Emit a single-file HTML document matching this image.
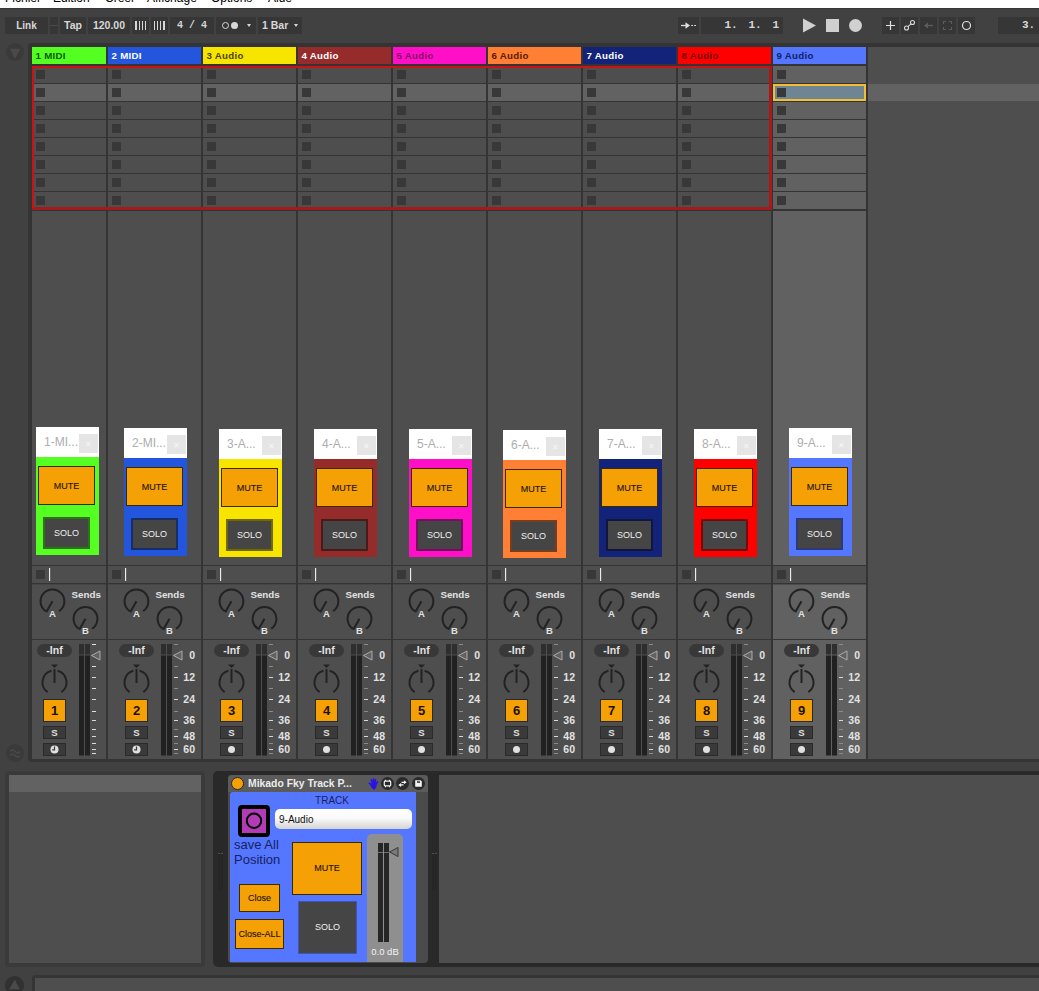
<!DOCTYPE html>
<html lang="fr"><head><meta charset="utf-8"><title>Live</title>
<style>
html,body{margin:0;padding:0;}
body{width:1039px;height:991px;overflow:hidden;background:#414141;position:relative;font-family:"Liberation Sans",sans-serif;}
div,svg,span{position:absolute;box-sizing:border-box;}
.t{white-space:nowrap;line-height:1;}
.b{font-weight:bold;}
.tb{background:#363636;top:17px;height:17px;}
.tbt{color:#d8d8d8;font-weight:bold;font-size:10.5px;top:3px;white-space:nowrap;line-height:11px;}
.hd{font-weight:bold;font-size:9.700px;letter-spacing:0.300px;line-height:18px;padding-left:3.500px;white-space:nowrap;overflow:hidden;}
.st{width:9px;height:9px;background:#383838;}
.lbl{color:#e2e2e2;font-weight:bold;white-space:nowrap;line-height:1;}
.mute{white-space:nowrap;background:#f5a105;border:1px solid #3a2a00;color:#1e1200;font-size:9px;-webkit-text-stroke:0.120px #1e1200;text-align:center;}
.solo{background:#454545;color:#f0f0f0;font-size:9px;text-align:center;}
.wt{color:#adadad;font-size:12px;white-space:nowrap;line-height:1;}
</style></head><body>

<div style="left:0;top:0;width:1039px;height:8px;background:#ffffff;overflow:hidden;">
<span class="t" style="left:5px;top:-8px;font-size:12px;color:#000;">Fichier</span>
<span class="t" style="left:53px;top:-8px;font-size:12px;color:#000;">Edition</span>
<span class="t" style="left:105px;top:-8px;font-size:12px;color:#000;">Créer</span>
<span class="t" style="left:147px;top:-8px;font-size:12px;color:#000;">Affichage</span>
<span class="t" style="left:211px;top:-8px;font-size:12px;color:#000;">Options</span>
<span class="t" style="left:268px;top:-8px;font-size:12px;color:#000;">Aide</span>
</div>
<div style="left:0;top:8px;width:1039px;height:1px;background:#363636;"></div>
<div class="tb" style="left:5px;width:43px;"><span class="tbt" style="left:0;width:43px;text-align:center;font-size:10px;">Link</span></div>
<div class="tb" style="left:50px;width:8px;"><div style="left:0;top:8px;width:8px;height:1px;background:#4a4a4a;"></div></div>
<div class="tb" style="left:60px;width:26px;"><span class="tbt" style="left:0;width:26px;text-align:center;">Tap</span></div>
<div class="tb" style="left:88px;width:42px;"><span class="tbt" style="left:0;width:42px;text-align:center;">120.00</span></div>
<div class="tb" style="left:132px;width:17px;"><div style="left:3px;top:4px;width:2px;height:9px;background:#d8d8d8;"></div><div style="left:7px;top:4px;width:1px;height:9px;background:#d8d8d8;"></div><div style="left:10px;top:4px;width:1px;height:9px;background:#d8d8d8;"></div><div style="left:13px;top:4px;width:1px;height:9px;background:#d8d8d8;"></div></div>
<div class="tb" style="left:151px;width:17px;"><div style="left:3px;top:4px;width:1px;height:9px;background:#d8d8d8;"></div><div style="left:6px;top:4px;width:1px;height:9px;background:#d8d8d8;"></div><div style="left:9px;top:4px;width:1px;height:9px;background:#d8d8d8;"></div><div style="left:12px;top:4px;width:2px;height:9px;background:#d8d8d8;"></div></div>
<div class="tb" style="left:170px;width:44px;"><span class="tbt" style="left:0;width:44px;text-align:center;font-family:'Liberation Mono',monospace;font-size:10px;">4 / 4</span></div>
<div class="tb" style="left:216px;width:40px;"><div style="left:6px;top:5px;width:7px;height:7px;border-radius:50%;border:1px solid #d8d8d8;"></div><div style="left:15px;top:5px;width:7px;height:7px;border-radius:50%;background:#d8d8d8;"></div><div style="left:31px;top:7px;width:0;height:0;border-left:2.5px solid transparent;border-right:2.5px solid transparent;border-top:3px solid #d8d8d8;"></div></div>
<div class="tb" style="left:258px;width:44px;"><span class="tbt" style="left:4px;">1 Bar</span><div style="left:36px;top:7px;width:0;height:0;border-left:2.5px solid transparent;border-right:2.5px solid transparent;border-top:3px solid #d8d8d8;"></div></div>
<div class="tb" style="left:678px;width:21px;"><svg style="left:0;top:0;" width="21" height="17" viewBox="0 0 21 17"><path d="M3 8.500H9" fill="none" stroke="#e0e0e0" stroke-width="1.300"/><path d="M7.500 5.200L12 8.500L7.500 11.800Z" fill="#e0e0e0"/><path d="M13.300 8.500H15M16.200 8.500H18" stroke="#e0e0e0" stroke-width="1.200"/></svg></div>
<div class="tb" style="left:701px;width:82px;"><span class="tbt" style="right:4px;font-family:'Liberation Mono',monospace;font-size:11px;word-spacing:4.2px;">1. 1. 1</span></div>
<svg style="left:802px;top:18px;" width="16" height="16" viewBox="0 0 16 16"><path d="M1 0.5L14 7.5L1 14.5Z" fill="#d0d0d0"/></svg>
<div style="left:826px;top:19px;width:13px;height:13px;background:#d0d0d0;"></div>
<div style="left:849px;top:19px;width:13px;height:13px;border-radius:50%;background:#d0d0d0;"></div>
<div class="tb" style="left:882px;width:17px;"><svg style="left:0;top:0;" width="17" height="17" viewBox="0 0 17 17"><path d="M8.5 4V13M4 8.5H13" stroke="#e0e0e0" stroke-width="1.2"/></svg></div>
<div class="tb" style="left:901px;width:17px;"><svg style="left:0;top:0;" width="17" height="17" viewBox="0 0 17 17"><circle cx="5.5" cy="11" r="2" fill="none" stroke="#d8d8d8" stroke-width="1.1"/><circle cx="11.5" cy="5.5" r="2" fill="none" stroke="#d8d8d8" stroke-width="1.1"/><path d="M7 9.6L10 6.9" stroke="#d8d8d8" stroke-width="1.1"/></svg></div>
<div class="tb" style="left:920px;width:17px;"><svg style="left:0;top:0;" width="17" height="17" viewBox="0 0 17 17"><path d="M4 8.5L8 5.5V11.5Z" fill="#5c5c5c"/><path d="M7 8.5H13" stroke="#5c5c5c" stroke-width="1.4"/></svg></div>
<div class="tb" style="left:939px;width:17px;"><svg style="left:0;top:0;" width="17" height="17" viewBox="0 0 17 17"><path d="M4.5 7V4.5H7M10 4.5H12.5V7M12.5 10V12.500H10M7 12.500H4.500V10" fill="none" stroke="#5c5c5c" stroke-width="1.1"/></svg></div>
<div class="tb" style="left:958px;width:17px;"><svg style="left:0;top:0;" width="17" height="17" viewBox="0 0 17 17"><circle cx="8.5" cy="8.500" r="4" fill="none" stroke="#e0e0e0" stroke-width="1.2"/></svg></div>
<div class="tb" style="left:998px;width:41px;"><span class="tbt" style="left:24px;font-family:'Liberation Mono',monospace;font-size:11px;">3.</span></div>
<div style="left:6px;top:43px;width:18px;height:18px;border-radius:50%;background:#3a3a3a;"></div>
<svg style="left:6px;top:43px;" width="18" height="18" viewBox="0 0 18 18"><path d="M3.700 5.700H14.300L9 15.700Z" fill="#4a4a4a"/></svg>
<div style="left:6px;top:744px;width:18px;height:18px;border-radius:50%;background:#3a3a3a;"></div>
<svg style="left:6px;top:744px;" width="18" height="18" viewBox="0 0 18 18"><path d="M4 7.5Q6.500 4.500 9 7.500T14 7.500M4 11.500Q6.500 8.500 9 11.500T14 11.500" fill="none" stroke="#4a4a4a" stroke-width="1.600"/></svg>
<div style="left:5px;top:976px;width:19px;height:19px;border-radius:50%;background:#313131;"></div>
<svg style="left:5px;top:976px;" width="19" height="19" viewBox="0 0 19 19"><path d="M4.200 13.300H14.800L9.700 3.600Z" fill="#4a4a4a"/></svg>
<div style="left:28px;top:43px;width:1015px;height:719px;background:#343434;border-radius:4px 0 0 4px;"></div>
<div style="left:868px;top:47px;width:171px;height:712px;background:#4e4e4e;"></div>
<div style="left:868px;top:84px;width:171px;height:17px;background:#626262;"></div>
<div class="hd" style="left:32px;top:47px;width:74px;height:17px;background:#55ff22;color:#0a5a00;">1 MIDI</div>
<div style="left:32px;top:66px;width:74px;height:17px;background:#4e4e4e;"></div>
<div class="st" style="left:36px;top:70px;"></div>
<div style="left:32px;top:84px;width:74px;height:17px;background:#626262;"></div>
<div class="st" style="left:36px;top:88px;"></div>
<div style="left:32px;top:102px;width:74px;height:17px;background:#4e4e4e;"></div>
<div class="st" style="left:36px;top:106px;"></div>
<div style="left:32px;top:120px;width:74px;height:17px;background:#4e4e4e;"></div>
<div class="st" style="left:36px;top:124px;"></div>
<div style="left:32px;top:138px;width:74px;height:17px;background:#4e4e4e;"></div>
<div class="st" style="left:36px;top:142px;"></div>
<div style="left:32px;top:156px;width:74px;height:17px;background:#4e4e4e;"></div>
<div class="st" style="left:36px;top:160px;"></div>
<div style="left:32px;top:174px;width:74px;height:17px;background:#4e4e4e;"></div>
<div class="st" style="left:36px;top:178px;"></div>
<div style="left:32px;top:192px;width:74px;height:17px;background:#4e4e4e;"></div>
<div class="st" style="left:36px;top:196px;"></div>
<div style="left:32px;top:211px;width:74px;height:354px;background:#4e4e4e;"></div>
<div style="left:32px;top:566px;width:74px;height:17px;background:#4e4e4e;"></div>
<div class="st" style="left:36px;top:570px;"></div>
<div style="left:49px;top:568px;width:1px;height:13px;background:#ececec;"></div>
<div style="left:50px;top:568px;width:1px;height:13px;background:rgba(255,255,255,0.130);"></div>
<div style="left:32px;top:584px;width:74px;height:55px;background:#4e4e4e;"></div>
<div style="left:32px;top:584px;width:74px;height:1px;background:#454545;"></div>
<div style="left:32px;top:640px;width:74px;height:119px;background:#4e4e4e;"></div>
<div class="hd" style="left:108px;top:47px;width:93px;height:17px;background:#2356dc;color:#ffffff;">2 MIDI</div>
<div style="left:108px;top:66px;width:93px;height:17px;background:#4e4e4e;"></div>
<div class="st" style="left:112px;top:70px;"></div>
<div style="left:108px;top:84px;width:93px;height:17px;background:#626262;"></div>
<div class="st" style="left:112px;top:88px;"></div>
<div style="left:108px;top:102px;width:93px;height:17px;background:#4e4e4e;"></div>
<div class="st" style="left:112px;top:106px;"></div>
<div style="left:108px;top:120px;width:93px;height:17px;background:#4e4e4e;"></div>
<div class="st" style="left:112px;top:124px;"></div>
<div style="left:108px;top:138px;width:93px;height:17px;background:#4e4e4e;"></div>
<div class="st" style="left:112px;top:142px;"></div>
<div style="left:108px;top:156px;width:93px;height:17px;background:#4e4e4e;"></div>
<div class="st" style="left:112px;top:160px;"></div>
<div style="left:108px;top:174px;width:93px;height:17px;background:#4e4e4e;"></div>
<div class="st" style="left:112px;top:178px;"></div>
<div style="left:108px;top:192px;width:93px;height:17px;background:#4e4e4e;"></div>
<div class="st" style="left:112px;top:196px;"></div>
<div style="left:108px;top:211px;width:93px;height:354px;background:#4e4e4e;"></div>
<div style="left:108px;top:566px;width:93px;height:17px;background:#4e4e4e;"></div>
<div class="st" style="left:112px;top:570px;"></div>
<div style="left:125px;top:568px;width:1px;height:13px;background:#ececec;"></div>
<div style="left:126px;top:568px;width:1px;height:13px;background:rgba(255,255,255,0.130);"></div>
<div style="left:108px;top:584px;width:93px;height:55px;background:#4e4e4e;"></div>
<div style="left:108px;top:584px;width:93px;height:1px;background:#454545;"></div>
<div style="left:108px;top:640px;width:93px;height:119px;background:#4e4e4e;"></div>
<div class="hd" style="left:203px;top:47px;width:93px;height:17px;background:#f7e500;color:#4a4400;">3 Audio</div>
<div style="left:203px;top:66px;width:93px;height:17px;background:#4e4e4e;"></div>
<div class="st" style="left:207px;top:70px;"></div>
<div style="left:203px;top:84px;width:93px;height:17px;background:#626262;"></div>
<div class="st" style="left:207px;top:88px;"></div>
<div style="left:203px;top:102px;width:93px;height:17px;background:#4e4e4e;"></div>
<div class="st" style="left:207px;top:106px;"></div>
<div style="left:203px;top:120px;width:93px;height:17px;background:#4e4e4e;"></div>
<div class="st" style="left:207px;top:124px;"></div>
<div style="left:203px;top:138px;width:93px;height:17px;background:#4e4e4e;"></div>
<div class="st" style="left:207px;top:142px;"></div>
<div style="left:203px;top:156px;width:93px;height:17px;background:#4e4e4e;"></div>
<div class="st" style="left:207px;top:160px;"></div>
<div style="left:203px;top:174px;width:93px;height:17px;background:#4e4e4e;"></div>
<div class="st" style="left:207px;top:178px;"></div>
<div style="left:203px;top:192px;width:93px;height:17px;background:#4e4e4e;"></div>
<div class="st" style="left:207px;top:196px;"></div>
<div style="left:203px;top:211px;width:93px;height:354px;background:#4e4e4e;"></div>
<div style="left:203px;top:566px;width:93px;height:17px;background:#4e4e4e;"></div>
<div class="st" style="left:207px;top:570px;"></div>
<div style="left:220px;top:568px;width:1px;height:13px;background:#ececec;"></div>
<div style="left:221px;top:568px;width:1px;height:13px;background:rgba(255,255,255,0.130);"></div>
<div style="left:203px;top:584px;width:93px;height:55px;background:#4e4e4e;"></div>
<div style="left:203px;top:584px;width:93px;height:1px;background:#454545;"></div>
<div style="left:203px;top:640px;width:93px;height:119px;background:#4e4e4e;"></div>
<div class="hd" style="left:298px;top:47px;width:93px;height:17px;background:#962b2b;color:#ffffff;">4 Audio</div>
<div style="left:298px;top:66px;width:93px;height:17px;background:#4e4e4e;"></div>
<div class="st" style="left:302px;top:70px;"></div>
<div style="left:298px;top:84px;width:93px;height:17px;background:#626262;"></div>
<div class="st" style="left:302px;top:88px;"></div>
<div style="left:298px;top:102px;width:93px;height:17px;background:#4e4e4e;"></div>
<div class="st" style="left:302px;top:106px;"></div>
<div style="left:298px;top:120px;width:93px;height:17px;background:#4e4e4e;"></div>
<div class="st" style="left:302px;top:124px;"></div>
<div style="left:298px;top:138px;width:93px;height:17px;background:#4e4e4e;"></div>
<div class="st" style="left:302px;top:142px;"></div>
<div style="left:298px;top:156px;width:93px;height:17px;background:#4e4e4e;"></div>
<div class="st" style="left:302px;top:160px;"></div>
<div style="left:298px;top:174px;width:93px;height:17px;background:#4e4e4e;"></div>
<div class="st" style="left:302px;top:178px;"></div>
<div style="left:298px;top:192px;width:93px;height:17px;background:#4e4e4e;"></div>
<div class="st" style="left:302px;top:196px;"></div>
<div style="left:298px;top:211px;width:93px;height:354px;background:#4e4e4e;"></div>
<div style="left:298px;top:566px;width:93px;height:17px;background:#4e4e4e;"></div>
<div class="st" style="left:302px;top:570px;"></div>
<div style="left:315px;top:568px;width:1px;height:13px;background:#ececec;"></div>
<div style="left:316px;top:568px;width:1px;height:13px;background:rgba(255,255,255,0.130);"></div>
<div style="left:298px;top:584px;width:93px;height:55px;background:#4e4e4e;"></div>
<div style="left:298px;top:584px;width:93px;height:1px;background:#454545;"></div>
<div style="left:298px;top:640px;width:93px;height:119px;background:#4e4e4e;"></div>
<div class="hd" style="left:393px;top:47px;width:93px;height:17px;background:#ff10c8;color:#8a0a6a;">5 Audio</div>
<div style="left:393px;top:66px;width:93px;height:17px;background:#4e4e4e;"></div>
<div class="st" style="left:397px;top:70px;"></div>
<div style="left:393px;top:84px;width:93px;height:17px;background:#626262;"></div>
<div class="st" style="left:397px;top:88px;"></div>
<div style="left:393px;top:102px;width:93px;height:17px;background:#4e4e4e;"></div>
<div class="st" style="left:397px;top:106px;"></div>
<div style="left:393px;top:120px;width:93px;height:17px;background:#4e4e4e;"></div>
<div class="st" style="left:397px;top:124px;"></div>
<div style="left:393px;top:138px;width:93px;height:17px;background:#4e4e4e;"></div>
<div class="st" style="left:397px;top:142px;"></div>
<div style="left:393px;top:156px;width:93px;height:17px;background:#4e4e4e;"></div>
<div class="st" style="left:397px;top:160px;"></div>
<div style="left:393px;top:174px;width:93px;height:17px;background:#4e4e4e;"></div>
<div class="st" style="left:397px;top:178px;"></div>
<div style="left:393px;top:192px;width:93px;height:17px;background:#4e4e4e;"></div>
<div class="st" style="left:397px;top:196px;"></div>
<div style="left:393px;top:211px;width:93px;height:354px;background:#4e4e4e;"></div>
<div style="left:393px;top:566px;width:93px;height:17px;background:#4e4e4e;"></div>
<div class="st" style="left:397px;top:570px;"></div>
<div style="left:410px;top:568px;width:1px;height:13px;background:#ececec;"></div>
<div style="left:411px;top:568px;width:1px;height:13px;background:rgba(255,255,255,0.130);"></div>
<div style="left:393px;top:584px;width:93px;height:55px;background:#4e4e4e;"></div>
<div style="left:393px;top:584px;width:93px;height:1px;background:#454545;"></div>
<div style="left:393px;top:640px;width:93px;height:119px;background:#4e4e4e;"></div>
<div class="hd" style="left:488px;top:47px;width:93px;height:17px;background:#ff7f35;color:#5a1a00;">6 Audio</div>
<div style="left:488px;top:66px;width:93px;height:17px;background:#4e4e4e;"></div>
<div class="st" style="left:492px;top:70px;"></div>
<div style="left:488px;top:84px;width:93px;height:17px;background:#626262;"></div>
<div class="st" style="left:492px;top:88px;"></div>
<div style="left:488px;top:102px;width:93px;height:17px;background:#4e4e4e;"></div>
<div class="st" style="left:492px;top:106px;"></div>
<div style="left:488px;top:120px;width:93px;height:17px;background:#4e4e4e;"></div>
<div class="st" style="left:492px;top:124px;"></div>
<div style="left:488px;top:138px;width:93px;height:17px;background:#4e4e4e;"></div>
<div class="st" style="left:492px;top:142px;"></div>
<div style="left:488px;top:156px;width:93px;height:17px;background:#4e4e4e;"></div>
<div class="st" style="left:492px;top:160px;"></div>
<div style="left:488px;top:174px;width:93px;height:17px;background:#4e4e4e;"></div>
<div class="st" style="left:492px;top:178px;"></div>
<div style="left:488px;top:192px;width:93px;height:17px;background:#4e4e4e;"></div>
<div class="st" style="left:492px;top:196px;"></div>
<div style="left:488px;top:211px;width:93px;height:354px;background:#4e4e4e;"></div>
<div style="left:488px;top:566px;width:93px;height:17px;background:#4e4e4e;"></div>
<div class="st" style="left:492px;top:570px;"></div>
<div style="left:505px;top:568px;width:1px;height:13px;background:#ececec;"></div>
<div style="left:506px;top:568px;width:1px;height:13px;background:rgba(255,255,255,0.130);"></div>
<div style="left:488px;top:584px;width:93px;height:55px;background:#4e4e4e;"></div>
<div style="left:488px;top:584px;width:93px;height:1px;background:#454545;"></div>
<div style="left:488px;top:640px;width:93px;height:119px;background:#4e4e4e;"></div>
<div class="hd" style="left:583px;top:47px;width:93px;height:17px;background:#14237a;color:#ffffff;">7 Audio</div>
<div style="left:583px;top:66px;width:93px;height:17px;background:#4e4e4e;"></div>
<div class="st" style="left:587px;top:70px;"></div>
<div style="left:583px;top:84px;width:93px;height:17px;background:#626262;"></div>
<div class="st" style="left:587px;top:88px;"></div>
<div style="left:583px;top:102px;width:93px;height:17px;background:#4e4e4e;"></div>
<div class="st" style="left:587px;top:106px;"></div>
<div style="left:583px;top:120px;width:93px;height:17px;background:#4e4e4e;"></div>
<div class="st" style="left:587px;top:124px;"></div>
<div style="left:583px;top:138px;width:93px;height:17px;background:#4e4e4e;"></div>
<div class="st" style="left:587px;top:142px;"></div>
<div style="left:583px;top:156px;width:93px;height:17px;background:#4e4e4e;"></div>
<div class="st" style="left:587px;top:160px;"></div>
<div style="left:583px;top:174px;width:93px;height:17px;background:#4e4e4e;"></div>
<div class="st" style="left:587px;top:178px;"></div>
<div style="left:583px;top:192px;width:93px;height:17px;background:#4e4e4e;"></div>
<div class="st" style="left:587px;top:196px;"></div>
<div style="left:583px;top:211px;width:93px;height:354px;background:#4e4e4e;"></div>
<div style="left:583px;top:566px;width:93px;height:17px;background:#4e4e4e;"></div>
<div class="st" style="left:587px;top:570px;"></div>
<div style="left:600px;top:568px;width:1px;height:13px;background:#ececec;"></div>
<div style="left:601px;top:568px;width:1px;height:13px;background:rgba(255,255,255,0.130);"></div>
<div style="left:583px;top:584px;width:93px;height:55px;background:#4e4e4e;"></div>
<div style="left:583px;top:584px;width:93px;height:1px;background:#454545;"></div>
<div style="left:583px;top:640px;width:93px;height:119px;background:#4e4e4e;"></div>
<div class="hd" style="left:678px;top:47px;width:93px;height:17px;background:#ff0000;color:#7a0000;">8 Audio</div>
<div style="left:678px;top:66px;width:93px;height:17px;background:#4e4e4e;"></div>
<div class="st" style="left:682px;top:70px;"></div>
<div style="left:678px;top:84px;width:93px;height:17px;background:#626262;"></div>
<div class="st" style="left:682px;top:88px;"></div>
<div style="left:678px;top:102px;width:93px;height:17px;background:#4e4e4e;"></div>
<div class="st" style="left:682px;top:106px;"></div>
<div style="left:678px;top:120px;width:93px;height:17px;background:#4e4e4e;"></div>
<div class="st" style="left:682px;top:124px;"></div>
<div style="left:678px;top:138px;width:93px;height:17px;background:#4e4e4e;"></div>
<div class="st" style="left:682px;top:142px;"></div>
<div style="left:678px;top:156px;width:93px;height:17px;background:#4e4e4e;"></div>
<div class="st" style="left:682px;top:160px;"></div>
<div style="left:678px;top:174px;width:93px;height:17px;background:#4e4e4e;"></div>
<div class="st" style="left:682px;top:178px;"></div>
<div style="left:678px;top:192px;width:93px;height:17px;background:#4e4e4e;"></div>
<div class="st" style="left:682px;top:196px;"></div>
<div style="left:678px;top:211px;width:93px;height:354px;background:#4e4e4e;"></div>
<div style="left:678px;top:566px;width:93px;height:17px;background:#4e4e4e;"></div>
<div class="st" style="left:682px;top:570px;"></div>
<div style="left:695px;top:568px;width:1px;height:13px;background:#ececec;"></div>
<div style="left:696px;top:568px;width:1px;height:13px;background:rgba(255,255,255,0.130);"></div>
<div style="left:678px;top:584px;width:93px;height:55px;background:#4e4e4e;"></div>
<div style="left:678px;top:584px;width:93px;height:1px;background:#454545;"></div>
<div style="left:678px;top:640px;width:93px;height:119px;background:#4e4e4e;"></div>
<div class="hd" style="left:773px;top:47px;width:93px;height:17px;background:#5577ff;color:#12206a;">9 Audio</div>
<div style="left:773px;top:66px;width:93px;height:17px;background:#616161;"></div>
<div class="st" style="left:777px;top:70px;"></div>
<div style="left:773px;top:84px;width:93px;height:17px;background:#616161;"></div>
<div class="st" style="left:777px;top:88px;"></div>
<div style="left:773px;top:102px;width:93px;height:17px;background:#616161;"></div>
<div class="st" style="left:777px;top:106px;"></div>
<div style="left:773px;top:120px;width:93px;height:17px;background:#616161;"></div>
<div class="st" style="left:777px;top:124px;"></div>
<div style="left:773px;top:138px;width:93px;height:17px;background:#616161;"></div>
<div class="st" style="left:777px;top:142px;"></div>
<div style="left:773px;top:156px;width:93px;height:17px;background:#616161;"></div>
<div class="st" style="left:777px;top:160px;"></div>
<div style="left:773px;top:174px;width:93px;height:17px;background:#616161;"></div>
<div class="st" style="left:777px;top:178px;"></div>
<div style="left:773px;top:192px;width:93px;height:17px;background:#616161;"></div>
<div class="st" style="left:777px;top:196px;"></div>
<div style="left:773px;top:211px;width:93px;height:354px;background:#616161;"></div>
<div style="left:773px;top:566px;width:93px;height:17px;background:#4e4e4e;"></div>
<div class="st" style="left:777px;top:570px;"></div>
<div style="left:790px;top:568px;width:1px;height:13px;background:#ececec;"></div>
<div style="left:791px;top:568px;width:1px;height:13px;background:rgba(255,255,255,0.130);"></div>
<div style="left:773px;top:584px;width:93px;height:55px;background:#616161;"></div>
<div style="left:773px;top:584px;width:93px;height:1px;background:#4c4c4c;"></div>
<div style="left:773px;top:640px;width:93px;height:119px;background:#616161;"></div>
<div style="left:773px;top:84px;width:93px;height:17px;background:#6e8694;border:2px solid #f4bd38;"></div>
<div class="st" style="left:777px;top:88px;"></div>
<div style="left:32px;top:66px;width:740px;height:144px;border:solid #cc1212;border-width:2.500px 3px 3px 2.500px;border-bottom-color:#a21a1a;border-right-color:#ac1818;"></div>
<div style="left:36px;top:427px;width:63px;height:128px;background:#55ff22;">
<div style="left:0;top:0;width:63px;height:30px;background:#ffffff;"></div>
<span class="wt" style="left:8px;top:9px;">1-MI...</span>
<div style="left:43px;top:7px;width:19px;height:19px;background:#e5e5e5;color:#f6f6f6;font-size:8px;line-height:21px;text-align:center;">✕</div>
<div class="mute" style="left:2px;top:39px;width:57px;height:39px;line-height:38px;">MUTE</div>
<div class="solo" style="left:7px;top:90px;width:47px;height:32px;line-height:28px;border:2px solid rgba(15,15,15,0.58);background-clip:padding-box;">SOLO</div>
</div>
<div style="left:124px;top:428px;width:63px;height:128px;background:#2356dc;">
<div style="left:0;top:0;width:63px;height:30px;background:#ffffff;"></div>
<span class="wt" style="left:8px;top:9px;">2-MI...</span>
<div style="left:43px;top:7px;width:19px;height:19px;background:#e5e5e5;color:#f6f6f6;font-size:8px;line-height:21px;text-align:center;">✕</div>
<div class="mute" style="left:2px;top:39px;width:57px;height:39px;line-height:38px;">MUTE</div>
<div class="solo" style="left:7px;top:90px;width:47px;height:32px;line-height:28px;border:2px solid rgba(15,15,15,0.58);background-clip:padding-box;">SOLO</div>
</div>
<div style="left:219px;top:429px;width:63px;height:128px;background:#f7e500;">
<div style="left:0;top:0;width:63px;height:30px;background:#ffffff;"></div>
<span class="wt" style="left:8px;top:9px;">3-A...</span>
<div style="left:43px;top:7px;width:19px;height:19px;background:#e5e5e5;color:#f6f6f6;font-size:8px;line-height:21px;text-align:center;">✕</div>
<div class="mute" style="left:2px;top:39px;width:57px;height:39px;line-height:38px;">MUTE</div>
<div class="solo" style="left:7px;top:90px;width:47px;height:32px;line-height:28px;border:2px solid rgba(15,15,15,0.58);background-clip:padding-box;">SOLO</div>
</div>
<div style="left:314px;top:429px;width:63px;height:128px;background:#962b2b;">
<div style="left:0;top:0;width:63px;height:30px;background:#ffffff;"></div>
<span class="wt" style="left:8px;top:9px;">4-A...</span>
<div style="left:43px;top:7px;width:19px;height:19px;background:#e5e5e5;color:#f6f6f6;font-size:8px;line-height:21px;text-align:center;">✕</div>
<div class="mute" style="left:2px;top:39px;width:57px;height:39px;line-height:38px;">MUTE</div>
<div class="solo" style="left:7px;top:90px;width:47px;height:32px;line-height:28px;border:2px solid rgba(15,15,15,0.58);background-clip:padding-box;">SOLO</div>
</div>
<div style="left:409px;top:429px;width:63px;height:128px;background:#ff10c8;">
<div style="left:0;top:0;width:63px;height:30px;background:#ffffff;"></div>
<span class="wt" style="left:8px;top:9px;">5-A...</span>
<div style="left:43px;top:7px;width:19px;height:19px;background:#e5e5e5;color:#f6f6f6;font-size:8px;line-height:21px;text-align:center;">✕</div>
<div class="mute" style="left:2px;top:39px;width:57px;height:39px;line-height:38px;">MUTE</div>
<div class="solo" style="left:7px;top:90px;width:47px;height:32px;line-height:28px;border:2px solid rgba(15,15,15,0.58);background-clip:padding-box;">SOLO</div>
</div>
<div style="left:503px;top:430px;width:63px;height:128px;background:#ff7f35;">
<div style="left:0;top:0;width:63px;height:30px;background:#ffffff;"></div>
<span class="wt" style="left:8px;top:9px;">6-A...</span>
<div style="left:43px;top:7px;width:19px;height:19px;background:#e5e5e5;color:#f6f6f6;font-size:8px;line-height:21px;text-align:center;">✕</div>
<div class="mute" style="left:2px;top:39px;width:57px;height:39px;line-height:38px;">MUTE</div>
<div class="solo" style="left:7px;top:90px;width:47px;height:32px;line-height:28px;border:2px solid rgba(15,15,15,0.58);background-clip:padding-box;">SOLO</div>
</div>
<div style="left:599px;top:429px;width:63px;height:128px;background:#14237a;">
<div style="left:0;top:0;width:63px;height:30px;background:#ffffff;"></div>
<span class="wt" style="left:8px;top:9px;">7-A...</span>
<div style="left:43px;top:7px;width:19px;height:19px;background:#e5e5e5;color:#f6f6f6;font-size:8px;line-height:21px;text-align:center;">✕</div>
<div class="mute" style="left:2px;top:39px;width:57px;height:39px;line-height:38px;">MUTE</div>
<div class="solo" style="left:7px;top:90px;width:47px;height:32px;line-height:28px;border:2px solid rgba(15,15,15,0.58);background-clip:padding-box;">SOLO</div>
</div>
<div style="left:694px;top:429px;width:63px;height:128px;background:#ff0000;">
<div style="left:0;top:0;width:63px;height:30px;background:#ffffff;"></div>
<span class="wt" style="left:8px;top:9px;">8-A...</span>
<div style="left:43px;top:7px;width:19px;height:19px;background:#e5e5e5;color:#f6f6f6;font-size:8px;line-height:21px;text-align:center;">✕</div>
<div class="mute" style="left:2px;top:39px;width:57px;height:39px;line-height:38px;">MUTE</div>
<div class="solo" style="left:7px;top:90px;width:47px;height:32px;line-height:28px;border:2px solid rgba(15,15,15,0.58);background-clip:padding-box;">SOLO</div>
</div>
<div style="left:789px;top:428px;width:63px;height:128px;background:#5577ff;">
<div style="left:0;top:0;width:63px;height:30px;background:#ffffff;"></div>
<span class="wt" style="left:8px;top:9px;">9-A...</span>
<div style="left:43px;top:7px;width:19px;height:19px;background:#e5e5e5;color:#f6f6f6;font-size:8px;line-height:21px;text-align:center;">✕</div>
<div class="mute" style="left:2px;top:39px;width:57px;height:39px;line-height:38px;">MUTE</div>
<div class="solo" style="left:7px;top:90px;width:47px;height:32px;line-height:28px;border:2px solid rgba(15,15,15,0.58);background-clip:padding-box;">SOLO</div>
</div>
<svg style="left:32px;top:584px;" width="74" height="55" viewBox="32 584 74 55"><path d="M45.80 611.17A11.9 11.9 0 1 1 59.10 611.17" fill="none" stroke="#222222" stroke-width="2"/><path d="M52.45 601.30L46.20 612.13" stroke="#222222" stroke-width="2"/><path d="M78.85 628.67A11.9 11.9 0 1 1 92.15 628.67" fill="none" stroke="#222222" stroke-width="2"/><path d="M85.50 618.80L79.25 629.63" stroke="#222222" stroke-width="2"/></svg>
<span class="lbl" style="left:48.5px;top:609px;font-size:9.5px;width:8px;text-align:center;">A</span>
<span class="lbl" style="left:81.5px;top:626px;font-size:9.5px;width:8px;text-align:center;">B</span>
<span class="lbl" style="left:71.5px;top:589.600px;font-size:9.800px;">Sends</span>
<div style="left:37px;top:644px;width:35px;height:13px;border-radius:7px;background:#383838;"></div>
<span class="lbl" style="left:37px;top:645px;width:35px;text-align:center;font-size:10.5px;">-Inf</span>
<svg style="left:32px;top:640px;" width="74" height="119" viewBox="32 640 74 119"><path d="M51.0 664.5H58.0L54.5 668Z" fill="#222222"/><path d="M47.62 692.13A12 12 0 0 1 51.39 670.71" fill="none" stroke="#222222" stroke-width="2"/><path d="M57.61 670.71A12 12 0 0 1 61.38 692.13" fill="none" stroke="#222222" stroke-width="2"/><path d="M54.5 683V669" stroke="#222222" stroke-width="2"/><rect x="79" y="644" width="5" height="10.500" fill="#2e2e2e"/><rect x="85" y="644" width="5" height="10.500" fill="#2e2e2e"/><rect x="79" y="655.5" width="5" height="100" fill="#212121"/><rect x="85" y="655.5" width="5" height="100" fill="#212121"/><rect x="92" y="677.0" width="4" height="1" fill="#d8d8d8"/><rect x="92" y="699.0" width="4" height="1" fill="#d8d8d8"/><rect x="92" y="720.0" width="4" height="1" fill="#d8d8d8"/><rect x="92" y="736.0" width="4" height="1" fill="#d8d8d8"/><rect x="92" y="749.0" width="4" height="1" fill="#d8d8d8"/><rect x="92" y="644.0" width="4" height="1" fill="#e0e0e0"/><rect x="92" y="666.0" width="4" height="1" fill="#e0e0e0"/><rect x="92" y="688.0" width="4" height="1" fill="#e0e0e0"/><rect x="92" y="711.0" width="4" height="1" fill="#e0e0e0"/><rect x="92" y="729.0" width="4" height="1" fill="#e0e0e0"/><rect x="92" y="743.0" width="4" height="1" fill="#e0e0e0"/><rect x="92" y="753.0" width="4" height="1" fill="#e0e0e0"/><path d="M91.5 655.5L100 651V660Z" fill="#626262" stroke="#b4b4b4" stroke-width="0.900"/></svg>
<div style="left:43px;top:699px;width:23px;height:23px;background:#f5a105;border:1px solid #2a2a2a;color:#1a1000;font-weight:bold;font-size:13px;line-height:21px;text-align:center;">1</div>
<div style="left:43px;top:726px;width:23px;height:13px;background:#3a3a3a;border:1px solid #2a2a2a;color:#e0e0e0;font-weight:bold;font-size:9.600px;line-height:11px;text-align:center;">S</div>
<div style="left:43px;top:743px;width:23px;height:13px;background:#3a3a3a;border:1px solid #2a2a2a;"></div>
<svg style="left:50px;top:745px;" width="9" height="9" viewBox="0 0 9 9"><circle cx="4.5" cy="4.500" r="4" fill="#e0e0e0"/><path d="M4.5 1.500V4.800H2.200" fill="none" stroke="#3a3a3a" stroke-width="1.200"/></svg>
<svg style="left:108px;top:584px;" width="93" height="55" viewBox="108 584 93 55"><path d="M129.80 611.17A11.9 11.9 0 1 1 143.10 611.17" fill="none" stroke="#222222" stroke-width="2"/><path d="M136.45 601.30L130.20 612.13" stroke="#222222" stroke-width="2"/><path d="M162.85 628.67A11.9 11.9 0 1 1 176.15 628.67" fill="none" stroke="#222222" stroke-width="2"/><path d="M169.50 618.80L163.25 629.63" stroke="#222222" stroke-width="2"/></svg>
<span class="lbl" style="left:132.4px;top:609px;font-size:9.5px;width:8px;text-align:center;">A</span>
<span class="lbl" style="left:165.5px;top:626px;font-size:9.5px;width:8px;text-align:center;">B</span>
<span class="lbl" style="left:155.4px;top:589.600px;font-size:9.800px;">Sends</span>
<div style="left:119px;top:644px;width:35px;height:13px;border-radius:7px;background:#383838;"></div>
<span class="lbl" style="left:119px;top:645px;width:35px;text-align:center;font-size:10.5px;">-Inf</span>
<svg style="left:108px;top:640px;" width="93" height="119" viewBox="108 640 93 119"><path d="M133.0 664.5H140.0L136.5 668Z" fill="#222222"/><path d="M129.62 692.13A12 12 0 0 1 133.39 670.71" fill="none" stroke="#222222" stroke-width="2"/><path d="M139.61 670.71A12 12 0 0 1 143.38 692.13" fill="none" stroke="#222222" stroke-width="2"/><path d="M136.5 683V669" stroke="#222222" stroke-width="2"/><rect x="161" y="644" width="5" height="10.500" fill="#2e2e2e"/><rect x="167" y="644" width="5" height="10.500" fill="#2e2e2e"/><rect x="161" y="655.5" width="5" height="100" fill="#212121"/><rect x="167" y="655.5" width="5" height="100" fill="#212121"/><rect x="174" y="677.0" width="4" height="1" fill="#d8d8d8"/><rect x="174" y="699.0" width="4" height="1" fill="#d8d8d8"/><rect x="174" y="720.0" width="4" height="1" fill="#d8d8d8"/><rect x="174" y="736.0" width="4" height="1" fill="#d8d8d8"/><rect x="174" y="749.0" width="4" height="1" fill="#d8d8d8"/><rect x="174" y="644.0" width="4" height="1" fill="#8a8a8a"/><rect x="174" y="666.0" width="4" height="1" fill="#8a8a8a"/><rect x="174" y="688.0" width="4" height="1" fill="#8a8a8a"/><rect x="174" y="711.0" width="4" height="1" fill="#8a8a8a"/><rect x="174" y="729.0" width="4" height="1" fill="#8a8a8a"/><rect x="174" y="743.0" width="4" height="1" fill="#8a8a8a"/><rect x="174" y="753.0" width="4" height="1" fill="#8a8a8a"/><path d="M173.5 655.5L182 651V660Z" fill="#626262" stroke="#b4b4b4" stroke-width="0.900"/></svg>
<span class="lbl" style="left:168px;top:650.0px;width:27px;text-align:right;font-size:10.5px;">0</span>
<span class="lbl" style="left:168px;top:671.5px;width:27px;text-align:right;font-size:10.5px;">12</span>
<span class="lbl" style="left:168px;top:693.5px;width:27px;text-align:right;font-size:10.5px;">24</span>
<span class="lbl" style="left:168px;top:714.5px;width:27px;text-align:right;font-size:10.5px;">36</span>
<span class="lbl" style="left:168px;top:731.0px;width:27px;text-align:right;font-size:10.5px;">48</span>
<span class="lbl" style="left:168px;top:743.5px;width:27px;text-align:right;font-size:10.5px;">60</span>
<div style="left:125px;top:699px;width:23px;height:23px;background:#f5a105;border:1px solid #2a2a2a;color:#1a1000;font-weight:bold;font-size:13px;line-height:21px;text-align:center;">2</div>
<div style="left:125px;top:726px;width:23px;height:13px;background:#3a3a3a;border:1px solid #2a2a2a;color:#e0e0e0;font-weight:bold;font-size:9.600px;line-height:11px;text-align:center;">S</div>
<div style="left:125px;top:743px;width:23px;height:13px;background:#3a3a3a;border:1px solid #2a2a2a;"></div>
<svg style="left:132px;top:745px;" width="9" height="9" viewBox="0 0 9 9"><circle cx="4.5" cy="4.500" r="4" fill="#e0e0e0"/><path d="M4.5 1.500V4.800H2.200" fill="none" stroke="#3a3a3a" stroke-width="1.200"/></svg>
<svg style="left:203px;top:584px;" width="93" height="55" viewBox="203 584 93 55"><path d="M224.80 611.17A11.9 11.9 0 1 1 238.10 611.17" fill="none" stroke="#222222" stroke-width="2"/><path d="M231.45 601.30L225.20 612.13" stroke="#222222" stroke-width="2"/><path d="M257.85 628.67A11.9 11.9 0 1 1 271.15 628.67" fill="none" stroke="#222222" stroke-width="2"/><path d="M264.50 618.80L258.25 629.63" stroke="#222222" stroke-width="2"/></svg>
<span class="lbl" style="left:227.4px;top:609px;font-size:9.5px;width:8px;text-align:center;">A</span>
<span class="lbl" style="left:260.5px;top:626px;font-size:9.5px;width:8px;text-align:center;">B</span>
<span class="lbl" style="left:250.4px;top:589.600px;font-size:9.800px;">Sends</span>
<div style="left:214px;top:644px;width:35px;height:13px;border-radius:7px;background:#383838;"></div>
<span class="lbl" style="left:214px;top:645px;width:35px;text-align:center;font-size:10.5px;">-Inf</span>
<svg style="left:203px;top:640px;" width="93" height="119" viewBox="203 640 93 119"><path d="M228.0 664.5H235.0L231.5 668Z" fill="#222222"/><path d="M224.62 692.13A12 12 0 0 1 228.39 670.71" fill="none" stroke="#222222" stroke-width="2"/><path d="M234.61 670.71A12 12 0 0 1 238.38 692.13" fill="none" stroke="#222222" stroke-width="2"/><path d="M231.5 683V669" stroke="#222222" stroke-width="2"/><rect x="256" y="644" width="5" height="10.500" fill="#2e2e2e"/><rect x="262" y="644" width="5" height="10.500" fill="#2e2e2e"/><rect x="256" y="655.5" width="5" height="100" fill="#212121"/><rect x="262" y="655.5" width="5" height="100" fill="#212121"/><rect x="269" y="677.0" width="4" height="1" fill="#d8d8d8"/><rect x="269" y="699.0" width="4" height="1" fill="#d8d8d8"/><rect x="269" y="720.0" width="4" height="1" fill="#d8d8d8"/><rect x="269" y="736.0" width="4" height="1" fill="#d8d8d8"/><rect x="269" y="749.0" width="4" height="1" fill="#d8d8d8"/><rect x="269" y="644.0" width="4" height="1" fill="#8a8a8a"/><rect x="269" y="666.0" width="4" height="1" fill="#8a8a8a"/><rect x="269" y="688.0" width="4" height="1" fill="#8a8a8a"/><rect x="269" y="711.0" width="4" height="1" fill="#8a8a8a"/><rect x="269" y="729.0" width="4" height="1" fill="#8a8a8a"/><rect x="269" y="743.0" width="4" height="1" fill="#8a8a8a"/><rect x="269" y="753.0" width="4" height="1" fill="#8a8a8a"/><path d="M268.5 655.5L277 651V660Z" fill="#626262" stroke="#b4b4b4" stroke-width="0.900"/></svg>
<span class="lbl" style="left:263px;top:650.0px;width:27px;text-align:right;font-size:10.5px;">0</span>
<span class="lbl" style="left:263px;top:671.5px;width:27px;text-align:right;font-size:10.5px;">12</span>
<span class="lbl" style="left:263px;top:693.5px;width:27px;text-align:right;font-size:10.5px;">24</span>
<span class="lbl" style="left:263px;top:714.5px;width:27px;text-align:right;font-size:10.5px;">36</span>
<span class="lbl" style="left:263px;top:731.0px;width:27px;text-align:right;font-size:10.5px;">48</span>
<span class="lbl" style="left:263px;top:743.5px;width:27px;text-align:right;font-size:10.5px;">60</span>
<div style="left:220px;top:699px;width:23px;height:23px;background:#f5a105;border:1px solid #2a2a2a;color:#1a1000;font-weight:bold;font-size:13px;line-height:21px;text-align:center;">3</div>
<div style="left:220px;top:726px;width:23px;height:13px;background:#3a3a3a;border:1px solid #2a2a2a;color:#e0e0e0;font-weight:bold;font-size:9.600px;line-height:11px;text-align:center;">S</div>
<div style="left:220px;top:743px;width:23px;height:13px;background:#3a3a3a;border:1px solid #2a2a2a;"></div>
<div style="left:228px;top:746px;width:7px;height:7px;border-radius:50%;background:#e0e0e0;"></div>
<svg style="left:298px;top:584px;" width="93" height="55" viewBox="298 584 93 55"><path d="M319.80 611.17A11.9 11.9 0 1 1 333.10 611.17" fill="none" stroke="#222222" stroke-width="2"/><path d="M326.45 601.30L320.20 612.13" stroke="#222222" stroke-width="2"/><path d="M352.85 628.67A11.9 11.9 0 1 1 366.15 628.67" fill="none" stroke="#222222" stroke-width="2"/><path d="M359.50 618.80L353.25 629.63" stroke="#222222" stroke-width="2"/></svg>
<span class="lbl" style="left:322.4px;top:609px;font-size:9.5px;width:8px;text-align:center;">A</span>
<span class="lbl" style="left:355.5px;top:626px;font-size:9.5px;width:8px;text-align:center;">B</span>
<span class="lbl" style="left:345.4px;top:589.600px;font-size:9.800px;">Sends</span>
<div style="left:309px;top:644px;width:35px;height:13px;border-radius:7px;background:#383838;"></div>
<span class="lbl" style="left:309px;top:645px;width:35px;text-align:center;font-size:10.5px;">-Inf</span>
<svg style="left:298px;top:640px;" width="93" height="119" viewBox="298 640 93 119"><path d="M323.0 664.5H330.0L326.5 668Z" fill="#222222"/><path d="M319.62 692.13A12 12 0 0 1 323.39 670.71" fill="none" stroke="#222222" stroke-width="2"/><path d="M329.61 670.71A12 12 0 0 1 333.38 692.13" fill="none" stroke="#222222" stroke-width="2"/><path d="M326.5 683V669" stroke="#222222" stroke-width="2"/><rect x="351" y="644" width="5" height="10.500" fill="#2e2e2e"/><rect x="357" y="644" width="5" height="10.500" fill="#2e2e2e"/><rect x="351" y="655.5" width="5" height="100" fill="#212121"/><rect x="357" y="655.5" width="5" height="100" fill="#212121"/><rect x="364" y="677.0" width="4" height="1" fill="#d8d8d8"/><rect x="364" y="699.0" width="4" height="1" fill="#d8d8d8"/><rect x="364" y="720.0" width="4" height="1" fill="#d8d8d8"/><rect x="364" y="736.0" width="4" height="1" fill="#d8d8d8"/><rect x="364" y="749.0" width="4" height="1" fill="#d8d8d8"/><rect x="364" y="644.0" width="4" height="1" fill="#8a8a8a"/><rect x="364" y="666.0" width="4" height="1" fill="#8a8a8a"/><rect x="364" y="688.0" width="4" height="1" fill="#8a8a8a"/><rect x="364" y="711.0" width="4" height="1" fill="#8a8a8a"/><rect x="364" y="729.0" width="4" height="1" fill="#8a8a8a"/><rect x="364" y="743.0" width="4" height="1" fill="#8a8a8a"/><rect x="364" y="753.0" width="4" height="1" fill="#8a8a8a"/><path d="M363.5 655.5L372 651V660Z" fill="#626262" stroke="#b4b4b4" stroke-width="0.900"/></svg>
<span class="lbl" style="left:358px;top:650.0px;width:27px;text-align:right;font-size:10.5px;">0</span>
<span class="lbl" style="left:358px;top:671.5px;width:27px;text-align:right;font-size:10.5px;">12</span>
<span class="lbl" style="left:358px;top:693.5px;width:27px;text-align:right;font-size:10.5px;">24</span>
<span class="lbl" style="left:358px;top:714.5px;width:27px;text-align:right;font-size:10.5px;">36</span>
<span class="lbl" style="left:358px;top:731.0px;width:27px;text-align:right;font-size:10.5px;">48</span>
<span class="lbl" style="left:358px;top:743.5px;width:27px;text-align:right;font-size:10.5px;">60</span>
<div style="left:315px;top:699px;width:23px;height:23px;background:#f5a105;border:1px solid #2a2a2a;color:#1a1000;font-weight:bold;font-size:13px;line-height:21px;text-align:center;">4</div>
<div style="left:315px;top:726px;width:23px;height:13px;background:#3a3a3a;border:1px solid #2a2a2a;color:#e0e0e0;font-weight:bold;font-size:9.600px;line-height:11px;text-align:center;">S</div>
<div style="left:315px;top:743px;width:23px;height:13px;background:#3a3a3a;border:1px solid #2a2a2a;"></div>
<div style="left:323px;top:746px;width:7px;height:7px;border-radius:50%;background:#e0e0e0;"></div>
<svg style="left:393px;top:584px;" width="93" height="55" viewBox="393 584 93 55"><path d="M414.80 611.17A11.9 11.9 0 1 1 428.10 611.17" fill="none" stroke="#222222" stroke-width="2"/><path d="M421.45 601.30L415.20 612.13" stroke="#222222" stroke-width="2"/><path d="M447.85 628.67A11.9 11.9 0 1 1 461.15 628.67" fill="none" stroke="#222222" stroke-width="2"/><path d="M454.50 618.80L448.25 629.63" stroke="#222222" stroke-width="2"/></svg>
<span class="lbl" style="left:417.4px;top:609px;font-size:9.5px;width:8px;text-align:center;">A</span>
<span class="lbl" style="left:450.5px;top:626px;font-size:9.5px;width:8px;text-align:center;">B</span>
<span class="lbl" style="left:440.4px;top:589.600px;font-size:9.800px;">Sends</span>
<div style="left:404px;top:644px;width:35px;height:13px;border-radius:7px;background:#383838;"></div>
<span class="lbl" style="left:404px;top:645px;width:35px;text-align:center;font-size:10.5px;">-Inf</span>
<svg style="left:393px;top:640px;" width="93" height="119" viewBox="393 640 93 119"><path d="M418.0 664.5H425.0L421.5 668Z" fill="#222222"/><path d="M414.62 692.13A12 12 0 0 1 418.39 670.71" fill="none" stroke="#222222" stroke-width="2"/><path d="M424.61 670.71A12 12 0 0 1 428.38 692.13" fill="none" stroke="#222222" stroke-width="2"/><path d="M421.5 683V669" stroke="#222222" stroke-width="2"/><rect x="446" y="644" width="5" height="10.500" fill="#2e2e2e"/><rect x="452" y="644" width="5" height="10.500" fill="#2e2e2e"/><rect x="446" y="655.5" width="5" height="100" fill="#212121"/><rect x="452" y="655.5" width="5" height="100" fill="#212121"/><rect x="459" y="677.0" width="4" height="1" fill="#d8d8d8"/><rect x="459" y="699.0" width="4" height="1" fill="#d8d8d8"/><rect x="459" y="720.0" width="4" height="1" fill="#d8d8d8"/><rect x="459" y="736.0" width="4" height="1" fill="#d8d8d8"/><rect x="459" y="749.0" width="4" height="1" fill="#d8d8d8"/><rect x="459" y="644.0" width="4" height="1" fill="#8a8a8a"/><rect x="459" y="666.0" width="4" height="1" fill="#8a8a8a"/><rect x="459" y="688.0" width="4" height="1" fill="#8a8a8a"/><rect x="459" y="711.0" width="4" height="1" fill="#8a8a8a"/><rect x="459" y="729.0" width="4" height="1" fill="#8a8a8a"/><rect x="459" y="743.0" width="4" height="1" fill="#8a8a8a"/><rect x="459" y="753.0" width="4" height="1" fill="#8a8a8a"/><path d="M458.5 655.5L467 651V660Z" fill="#626262" stroke="#b4b4b4" stroke-width="0.900"/></svg>
<span class="lbl" style="left:453px;top:650.0px;width:27px;text-align:right;font-size:10.5px;">0</span>
<span class="lbl" style="left:453px;top:671.5px;width:27px;text-align:right;font-size:10.5px;">12</span>
<span class="lbl" style="left:453px;top:693.5px;width:27px;text-align:right;font-size:10.5px;">24</span>
<span class="lbl" style="left:453px;top:714.5px;width:27px;text-align:right;font-size:10.5px;">36</span>
<span class="lbl" style="left:453px;top:731.0px;width:27px;text-align:right;font-size:10.5px;">48</span>
<span class="lbl" style="left:453px;top:743.5px;width:27px;text-align:right;font-size:10.5px;">60</span>
<div style="left:410px;top:699px;width:23px;height:23px;background:#f5a105;border:1px solid #2a2a2a;color:#1a1000;font-weight:bold;font-size:13px;line-height:21px;text-align:center;">5</div>
<div style="left:410px;top:726px;width:23px;height:13px;background:#3a3a3a;border:1px solid #2a2a2a;color:#e0e0e0;font-weight:bold;font-size:9.600px;line-height:11px;text-align:center;">S</div>
<div style="left:410px;top:743px;width:23px;height:13px;background:#3a3a3a;border:1px solid #2a2a2a;"></div>
<div style="left:418px;top:746px;width:7px;height:7px;border-radius:50%;background:#e0e0e0;"></div>
<svg style="left:488px;top:584px;" width="93" height="55" viewBox="488 584 93 55"><path d="M509.80 611.17A11.9 11.9 0 1 1 523.10 611.17" fill="none" stroke="#222222" stroke-width="2"/><path d="M516.45 601.30L510.20 612.13" stroke="#222222" stroke-width="2"/><path d="M542.85 628.67A11.9 11.9 0 1 1 556.15 628.67" fill="none" stroke="#222222" stroke-width="2"/><path d="M549.50 618.80L543.25 629.63" stroke="#222222" stroke-width="2"/></svg>
<span class="lbl" style="left:512.5px;top:609px;font-size:9.5px;width:8px;text-align:center;">A</span>
<span class="lbl" style="left:545.5px;top:626px;font-size:9.5px;width:8px;text-align:center;">B</span>
<span class="lbl" style="left:535.5px;top:589.600px;font-size:9.800px;">Sends</span>
<div style="left:499px;top:644px;width:35px;height:13px;border-radius:7px;background:#383838;"></div>
<span class="lbl" style="left:499px;top:645px;width:35px;text-align:center;font-size:10.5px;">-Inf</span>
<svg style="left:488px;top:640px;" width="93" height="119" viewBox="488 640 93 119"><path d="M513.0 664.5H520.0L516.5 668Z" fill="#222222"/><path d="M509.62 692.13A12 12 0 0 1 513.39 670.71" fill="none" stroke="#222222" stroke-width="2"/><path d="M519.61 670.71A12 12 0 0 1 523.38 692.13" fill="none" stroke="#222222" stroke-width="2"/><path d="M516.5 683V669" stroke="#222222" stroke-width="2"/><rect x="541" y="644" width="5" height="10.500" fill="#2e2e2e"/><rect x="547" y="644" width="5" height="10.500" fill="#2e2e2e"/><rect x="541" y="655.5" width="5" height="100" fill="#212121"/><rect x="547" y="655.5" width="5" height="100" fill="#212121"/><rect x="554" y="677.0" width="4" height="1" fill="#d8d8d8"/><rect x="554" y="699.0" width="4" height="1" fill="#d8d8d8"/><rect x="554" y="720.0" width="4" height="1" fill="#d8d8d8"/><rect x="554" y="736.0" width="4" height="1" fill="#d8d8d8"/><rect x="554" y="749.0" width="4" height="1" fill="#d8d8d8"/><rect x="554" y="644.0" width="4" height="1" fill="#8a8a8a"/><rect x="554" y="666.0" width="4" height="1" fill="#8a8a8a"/><rect x="554" y="688.0" width="4" height="1" fill="#8a8a8a"/><rect x="554" y="711.0" width="4" height="1" fill="#8a8a8a"/><rect x="554" y="729.0" width="4" height="1" fill="#8a8a8a"/><rect x="554" y="743.0" width="4" height="1" fill="#8a8a8a"/><rect x="554" y="753.0" width="4" height="1" fill="#8a8a8a"/><path d="M553.5 655.5L562 651V660Z" fill="#626262" stroke="#b4b4b4" stroke-width="0.900"/></svg>
<span class="lbl" style="left:548px;top:650.0px;width:27px;text-align:right;font-size:10.5px;">0</span>
<span class="lbl" style="left:548px;top:671.5px;width:27px;text-align:right;font-size:10.5px;">12</span>
<span class="lbl" style="left:548px;top:693.5px;width:27px;text-align:right;font-size:10.5px;">24</span>
<span class="lbl" style="left:548px;top:714.5px;width:27px;text-align:right;font-size:10.5px;">36</span>
<span class="lbl" style="left:548px;top:731.0px;width:27px;text-align:right;font-size:10.5px;">48</span>
<span class="lbl" style="left:548px;top:743.5px;width:27px;text-align:right;font-size:10.5px;">60</span>
<div style="left:505px;top:699px;width:23px;height:23px;background:#f5a105;border:1px solid #2a2a2a;color:#1a1000;font-weight:bold;font-size:13px;line-height:21px;text-align:center;">6</div>
<div style="left:505px;top:726px;width:23px;height:13px;background:#3a3a3a;border:1px solid #2a2a2a;color:#e0e0e0;font-weight:bold;font-size:9.600px;line-height:11px;text-align:center;">S</div>
<div style="left:505px;top:743px;width:23px;height:13px;background:#3a3a3a;border:1px solid #2a2a2a;"></div>
<div style="left:513px;top:746px;width:7px;height:7px;border-radius:50%;background:#e0e0e0;"></div>
<svg style="left:583px;top:584px;" width="93" height="55" viewBox="583 584 93 55"><path d="M604.80 611.17A11.9 11.9 0 1 1 618.10 611.17" fill="none" stroke="#222222" stroke-width="2"/><path d="M611.45 601.30L605.20 612.13" stroke="#222222" stroke-width="2"/><path d="M637.85 628.67A11.9 11.9 0 1 1 651.15 628.67" fill="none" stroke="#222222" stroke-width="2"/><path d="M644.50 618.80L638.25 629.63" stroke="#222222" stroke-width="2"/></svg>
<span class="lbl" style="left:607.5px;top:609px;font-size:9.5px;width:8px;text-align:center;">A</span>
<span class="lbl" style="left:640.5px;top:626px;font-size:9.5px;width:8px;text-align:center;">B</span>
<span class="lbl" style="left:630.5px;top:589.600px;font-size:9.800px;">Sends</span>
<div style="left:594px;top:644px;width:35px;height:13px;border-radius:7px;background:#383838;"></div>
<span class="lbl" style="left:594px;top:645px;width:35px;text-align:center;font-size:10.5px;">-Inf</span>
<svg style="left:583px;top:640px;" width="93" height="119" viewBox="583 640 93 119"><path d="M608.0 664.5H615.0L611.5 668Z" fill="#222222"/><path d="M604.62 692.13A12 12 0 0 1 608.39 670.71" fill="none" stroke="#222222" stroke-width="2"/><path d="M614.61 670.71A12 12 0 0 1 618.38 692.13" fill="none" stroke="#222222" stroke-width="2"/><path d="M611.5 683V669" stroke="#222222" stroke-width="2"/><rect x="636" y="644" width="5" height="10.500" fill="#2e2e2e"/><rect x="642" y="644" width="5" height="10.500" fill="#2e2e2e"/><rect x="636" y="655.5" width="5" height="100" fill="#212121"/><rect x="642" y="655.5" width="5" height="100" fill="#212121"/><rect x="649" y="677.0" width="4" height="1" fill="#d8d8d8"/><rect x="649" y="699.0" width="4" height="1" fill="#d8d8d8"/><rect x="649" y="720.0" width="4" height="1" fill="#d8d8d8"/><rect x="649" y="736.0" width="4" height="1" fill="#d8d8d8"/><rect x="649" y="749.0" width="4" height="1" fill="#d8d8d8"/><rect x="649" y="644.0" width="4" height="1" fill="#8a8a8a"/><rect x="649" y="666.0" width="4" height="1" fill="#8a8a8a"/><rect x="649" y="688.0" width="4" height="1" fill="#8a8a8a"/><rect x="649" y="711.0" width="4" height="1" fill="#8a8a8a"/><rect x="649" y="729.0" width="4" height="1" fill="#8a8a8a"/><rect x="649" y="743.0" width="4" height="1" fill="#8a8a8a"/><rect x="649" y="753.0" width="4" height="1" fill="#8a8a8a"/><path d="M648.5 655.5L657 651V660Z" fill="#626262" stroke="#b4b4b4" stroke-width="0.900"/></svg>
<span class="lbl" style="left:643px;top:650.0px;width:27px;text-align:right;font-size:10.5px;">0</span>
<span class="lbl" style="left:643px;top:671.5px;width:27px;text-align:right;font-size:10.5px;">12</span>
<span class="lbl" style="left:643px;top:693.5px;width:27px;text-align:right;font-size:10.5px;">24</span>
<span class="lbl" style="left:643px;top:714.5px;width:27px;text-align:right;font-size:10.5px;">36</span>
<span class="lbl" style="left:643px;top:731.0px;width:27px;text-align:right;font-size:10.5px;">48</span>
<span class="lbl" style="left:643px;top:743.5px;width:27px;text-align:right;font-size:10.5px;">60</span>
<div style="left:600px;top:699px;width:23px;height:23px;background:#f5a105;border:1px solid #2a2a2a;color:#1a1000;font-weight:bold;font-size:13px;line-height:21px;text-align:center;">7</div>
<div style="left:600px;top:726px;width:23px;height:13px;background:#3a3a3a;border:1px solid #2a2a2a;color:#e0e0e0;font-weight:bold;font-size:9.600px;line-height:11px;text-align:center;">S</div>
<div style="left:600px;top:743px;width:23px;height:13px;background:#3a3a3a;border:1px solid #2a2a2a;"></div>
<div style="left:608px;top:746px;width:7px;height:7px;border-radius:50%;background:#e0e0e0;"></div>
<svg style="left:678px;top:584px;" width="93" height="55" viewBox="678 584 93 55"><path d="M699.80 611.17A11.9 11.9 0 1 1 713.10 611.17" fill="none" stroke="#222222" stroke-width="2"/><path d="M706.45 601.30L700.20 612.13" stroke="#222222" stroke-width="2"/><path d="M732.85 628.67A11.9 11.9 0 1 1 746.15 628.67" fill="none" stroke="#222222" stroke-width="2"/><path d="M739.50 618.80L733.25 629.63" stroke="#222222" stroke-width="2"/></svg>
<span class="lbl" style="left:702.5px;top:609px;font-size:9.5px;width:8px;text-align:center;">A</span>
<span class="lbl" style="left:735.5px;top:626px;font-size:9.5px;width:8px;text-align:center;">B</span>
<span class="lbl" style="left:725.5px;top:589.600px;font-size:9.800px;">Sends</span>
<div style="left:689px;top:644px;width:35px;height:13px;border-radius:7px;background:#383838;"></div>
<span class="lbl" style="left:689px;top:645px;width:35px;text-align:center;font-size:10.5px;">-Inf</span>
<svg style="left:678px;top:640px;" width="93" height="119" viewBox="678 640 93 119"><path d="M703.0 664.5H710.0L706.5 668Z" fill="#222222"/><path d="M699.62 692.13A12 12 0 0 1 703.39 670.71" fill="none" stroke="#222222" stroke-width="2"/><path d="M709.61 670.71A12 12 0 0 1 713.38 692.13" fill="none" stroke="#222222" stroke-width="2"/><path d="M706.5 683V669" stroke="#222222" stroke-width="2"/><rect x="731" y="644" width="5" height="10.500" fill="#2e2e2e"/><rect x="737" y="644" width="5" height="10.500" fill="#2e2e2e"/><rect x="731" y="655.5" width="5" height="100" fill="#212121"/><rect x="737" y="655.5" width="5" height="100" fill="#212121"/><rect x="744" y="677.0" width="4" height="1" fill="#d8d8d8"/><rect x="744" y="699.0" width="4" height="1" fill="#d8d8d8"/><rect x="744" y="720.0" width="4" height="1" fill="#d8d8d8"/><rect x="744" y="736.0" width="4" height="1" fill="#d8d8d8"/><rect x="744" y="749.0" width="4" height="1" fill="#d8d8d8"/><rect x="744" y="644.0" width="4" height="1" fill="#8a8a8a"/><rect x="744" y="666.0" width="4" height="1" fill="#8a8a8a"/><rect x="744" y="688.0" width="4" height="1" fill="#8a8a8a"/><rect x="744" y="711.0" width="4" height="1" fill="#8a8a8a"/><rect x="744" y="729.0" width="4" height="1" fill="#8a8a8a"/><rect x="744" y="743.0" width="4" height="1" fill="#8a8a8a"/><rect x="744" y="753.0" width="4" height="1" fill="#8a8a8a"/><path d="M743.5 655.5L752 651V660Z" fill="#626262" stroke="#b4b4b4" stroke-width="0.900"/></svg>
<span class="lbl" style="left:738px;top:650.0px;width:27px;text-align:right;font-size:10.5px;">0</span>
<span class="lbl" style="left:738px;top:671.5px;width:27px;text-align:right;font-size:10.5px;">12</span>
<span class="lbl" style="left:738px;top:693.5px;width:27px;text-align:right;font-size:10.5px;">24</span>
<span class="lbl" style="left:738px;top:714.5px;width:27px;text-align:right;font-size:10.5px;">36</span>
<span class="lbl" style="left:738px;top:731.0px;width:27px;text-align:right;font-size:10.5px;">48</span>
<span class="lbl" style="left:738px;top:743.5px;width:27px;text-align:right;font-size:10.5px;">60</span>
<div style="left:695px;top:699px;width:23px;height:23px;background:#f5a105;border:1px solid #2a2a2a;color:#1a1000;font-weight:bold;font-size:13px;line-height:21px;text-align:center;">8</div>
<div style="left:695px;top:726px;width:23px;height:13px;background:#3a3a3a;border:1px solid #2a2a2a;color:#e0e0e0;font-weight:bold;font-size:9.600px;line-height:11px;text-align:center;">S</div>
<div style="left:695px;top:743px;width:23px;height:13px;background:#3a3a3a;border:1px solid #2a2a2a;"></div>
<div style="left:703px;top:746px;width:7px;height:7px;border-radius:50%;background:#e0e0e0;"></div>
<svg style="left:773px;top:584px;" width="93" height="55" viewBox="773 584 93 55"><path d="M794.80 611.17A11.9 11.9 0 1 1 808.10 611.17" fill="none" stroke="#222222" stroke-width="2"/><path d="M801.45 601.30L795.20 612.13" stroke="#222222" stroke-width="2"/><path d="M827.85 628.67A11.9 11.9 0 1 1 841.15 628.67" fill="none" stroke="#222222" stroke-width="2"/><path d="M834.50 618.80L828.25 629.63" stroke="#222222" stroke-width="2"/></svg>
<span class="lbl" style="left:797.5px;top:609px;font-size:9.5px;width:8px;text-align:center;">A</span>
<span class="lbl" style="left:830.5px;top:626px;font-size:9.5px;width:8px;text-align:center;">B</span>
<span class="lbl" style="left:820.5px;top:589.600px;font-size:9.800px;">Sends</span>
<div style="left:784px;top:644px;width:35px;height:13px;border-radius:7px;background:#383838;"></div>
<span class="lbl" style="left:784px;top:645px;width:35px;text-align:center;font-size:10.5px;">-Inf</span>
<svg style="left:773px;top:640px;" width="93" height="119" viewBox="773 640 93 119"><path d="M798.0 664.5H805.0L801.5 668Z" fill="#222222"/><path d="M794.62 692.13A12 12 0 0 1 798.39 670.71" fill="none" stroke="#222222" stroke-width="2"/><path d="M804.61 670.71A12 12 0 0 1 808.38 692.13" fill="none" stroke="#222222" stroke-width="2"/><path d="M801.5 683V669" stroke="#222222" stroke-width="2"/><rect x="826" y="644" width="5" height="10.500" fill="#2e2e2e"/><rect x="832" y="644" width="5" height="10.500" fill="#2e2e2e"/><rect x="826" y="655.5" width="5" height="100" fill="#212121"/><rect x="832" y="655.5" width="5" height="100" fill="#212121"/><rect x="839" y="677.0" width="4" height="1" fill="#d8d8d8"/><rect x="839" y="699.0" width="4" height="1" fill="#d8d8d8"/><rect x="839" y="720.0" width="4" height="1" fill="#d8d8d8"/><rect x="839" y="736.0" width="4" height="1" fill="#d8d8d8"/><rect x="839" y="749.0" width="4" height="1" fill="#d8d8d8"/><rect x="839" y="644.0" width="4" height="1" fill="#8a8a8a"/><rect x="839" y="666.0" width="4" height="1" fill="#8a8a8a"/><rect x="839" y="688.0" width="4" height="1" fill="#8a8a8a"/><rect x="839" y="711.0" width="4" height="1" fill="#8a8a8a"/><rect x="839" y="729.0" width="4" height="1" fill="#8a8a8a"/><rect x="839" y="743.0" width="4" height="1" fill="#8a8a8a"/><rect x="839" y="753.0" width="4" height="1" fill="#8a8a8a"/><path d="M838.5 655.5L847 651V660Z" fill="#626262" stroke="#b4b4b4" stroke-width="0.900"/></svg>
<span class="lbl" style="left:833px;top:650.0px;width:27px;text-align:right;font-size:10.5px;">0</span>
<span class="lbl" style="left:833px;top:671.5px;width:27px;text-align:right;font-size:10.5px;">12</span>
<span class="lbl" style="left:833px;top:693.5px;width:27px;text-align:right;font-size:10.5px;">24</span>
<span class="lbl" style="left:833px;top:714.5px;width:27px;text-align:right;font-size:10.5px;">36</span>
<span class="lbl" style="left:833px;top:731.0px;width:27px;text-align:right;font-size:10.5px;">48</span>
<span class="lbl" style="left:833px;top:743.5px;width:27px;text-align:right;font-size:10.5px;">60</span>
<div style="left:790px;top:699px;width:23px;height:23px;background:#f5a105;border:1px solid #2a2a2a;color:#1a1000;font-weight:bold;font-size:13px;line-height:21px;text-align:center;">9</div>
<div style="left:790px;top:726px;width:23px;height:13px;background:#3a3a3a;border:1px solid #2a2a2a;color:#e0e0e0;font-weight:bold;font-size:9.600px;line-height:11px;text-align:center;">S</div>
<div style="left:790px;top:743px;width:23px;height:13px;background:#3a3a3a;border:1px solid #2a2a2a;"></div>
<div style="left:798px;top:746px;width:7px;height:7px;border-radius:50%;background:#e0e0e0;"></div>
<div style="left:5px;top:771px;width:200px;height:196px;background:#3a3a3a;border-radius:4px;"></div>
<div style="left:9px;top:775px;width:192px;height:188px;background:#4e4e4e;"></div>
<div style="left:9px;top:775px;width:192px;height:17px;background:#626262;"></div>
<div style="left:213px;top:771px;width:830px;height:196px;background:#292929;border-radius:5px 0 0 5px;"></div>
<div style="left:439px;top:775px;width:600px;height:188px;background:#4e4e4e;"></div>
<div style="left:218px;top:854px;width:2px;height:36px;background:#252525;"></div>
<div style="left:218px;top:853px;width:2px;height:1px;background:#505050;"></div>
<div style="left:221px;top:854px;width:2px;height:36px;background:#252525;"></div>
<div style="left:221px;top:853px;width:2px;height:1px;background:#505050;"></div>
<div style="left:432px;top:854px;width:2px;height:36px;background:#252525;"></div>
<div style="left:432px;top:853px;width:2px;height:1px;background:#505050;"></div>
<div style="left:435px;top:854px;width:2px;height:36px;background:#252525;"></div>
<div style="left:435px;top:853px;width:2px;height:1px;background:#505050;"></div>
<div style="left:228px;top:775px;width:200px;height:188px;background:#4b4b4b;border-radius:4px;overflow:hidden;">
<div style="left:0;top:0;width:200px;height:17px;background:#5b5b5b;"></div>
<div style="left:3px;top:2px;width:13px;height:13px;border-radius:50%;background:#f5a105;border:1px solid #2a2a2a;"></div>
<span class="t b" style="left:20px;top:4px;font-size:10.400px;color:#ececec;">Mikado Fky Track P...</span>
<svg style="left:139px;top:2.700px;" width="12" height="12" viewBox="0 0 12 12"><g stroke="#2a12e6" stroke-width="1.700" stroke-linecap="round" fill="none"><path d="M6.200 7.500L2.300 5.300M6.300 7L4.200 2M6.600 7L6.500 1.200M7 7L8.600 1.700M7.500 7.500L10.500 4"/></g><path d="M3.600 6.800L9.300 6.300C9.300 8.500 8.500 10 7 11.600C5.500 10.500 4.300 8.800 3.600 6.800Z" fill="#2a12e6" stroke="#2a12e6" stroke-width="1" stroke-linejoin="round"/></svg>
<div style="left:152.5px;top:2px;width:13px;height:13px;border-radius:50%;background:#2a2a2a;"></div>
<div style="left:168.0px;top:2px;width:13px;height:13px;border-radius:50%;background:#2a2a2a;"></div>
<div style="left:184.0px;top:2px;width:13px;height:13px;border-radius:50%;background:#2a2a2a;"></div>
<svg style="left:152.500px;top:2px;" width="13" height="13" viewBox="0 0 13 13"><rect x="3.300" y="4.200" width="6.400" height="4.600" rx="0.800" fill="none" stroke="#f2f2f2" stroke-width="1.200"/><path d="M4.500 2.800V4M8.500 2.800V4M4.500 9V10.200M8.500 9V10.200" stroke="#f2f2f2" stroke-width="1.100"/></svg>
<svg style="left:168px;top:2px;" width="13" height="13" viewBox="0 0 13 13"><path d="M5.500 5.300H8.200M4.800 7.900H7.500" fill="none" stroke="#f2f2f2" stroke-width="1.300"/><path d="M7.900 3.300L10.700 5.300L7.900 7.300ZM5.100 5.900L2.300 7.900L5.100 9.900Z" fill="#f2f2f2"/></svg>
<svg style="left:184px;top:2px;" width="13" height="13" viewBox="0 0 13 13"><path d="M3.200 3.300H8.600L9.800 4.500V9.700H3.200Z" fill="#f2f2f2"/><rect x="5" y="4.300" width="3" height="1.500" fill="#2a2a2a"/></svg>
<div style="left:2px;top:17px;width:186px;height:170px;background:#5577ff;border-radius:3px 0 0 0;"></div>
<span class="t" style="left:84px;top:21px;font-size:10px;color:#15215f;width:40px;text-align:center;">TRACK</span>
<div style="left:10px;top:30px;width:32px;height:32px;background:#b23cb6;border:4px solid #000;border-radius:4px;"></div>
<svg style="left:10px;top:30px;" width="32" height="32" viewBox="0 0 32 32"><circle cx="16" cy="15.800" r="7.200" fill="none" stroke="#000" stroke-width="2"/></svg>
<div style="left:47px;top:34px;width:137px;height:20px;border-radius:5px;background:linear-gradient(#ffffff,#fafafa 45%,#d4d4d4);"></div>
<span class="t" style="left:51px;top:39.500px;font-size:10px;color:#111;">9-Audio</span>
<span class="t" style="left:6px;top:62px;font-size:13px;color:#15215f;line-height:15px;white-space:normal;width:60px;">save All Position</span>
<div class="mute" style="left:64px;top:67px;width:70px;height:53px;line-height:51px;">MUTE</div>
<div class="solo" style="left:70px;top:126px;width:59px;height:53px;line-height:51px;border:1px solid #3d55b8;">SOLO</div>
<div class="mute" style="left:11px;top:109px;width:41px;height:28px;line-height:26px;">Close</div>
<div class="mute" style="left:7px;top:144px;width:49px;height:30px;line-height:28px;">Close-ALL</div>
<div style="left:139px;top:59px;width:36px;height:128px;background:#8f8f8f;border-radius:5px 5px 0 0;"></div>
<div style="left:150px;top:68px;width:5px;height:99px;background:#262626;"></div>
<div style="left:156px;top:68px;width:5px;height:99px;background:#262626;"></div>
<div style="left:150px;top:77px;width:11px;height:1px;background:#8f8f8f;opacity:.7;"></div>
<svg style="left:160px;top:71px;" width="12" height="12" viewBox="0 0 12 12"><path d="M1.500 6L10 1.500V10.500Z" fill="#7a7a7a" stroke="#3a3a3a" stroke-width="1"/></svg>
<span class="t" style="left:139px;top:172px;width:36px;text-align:center;font-size:9.500px;color:#f4f4f4;">0.0 dB</span>
</div>
<div style="left:32px;top:975px;width:1011px;height:20px;background:#353535;border-radius:3px 0 0 0;"></div>
<div style="left:35px;top:978px;width:1004px;height:13px;background:#4e4e4e;"></div>
</body></html>
